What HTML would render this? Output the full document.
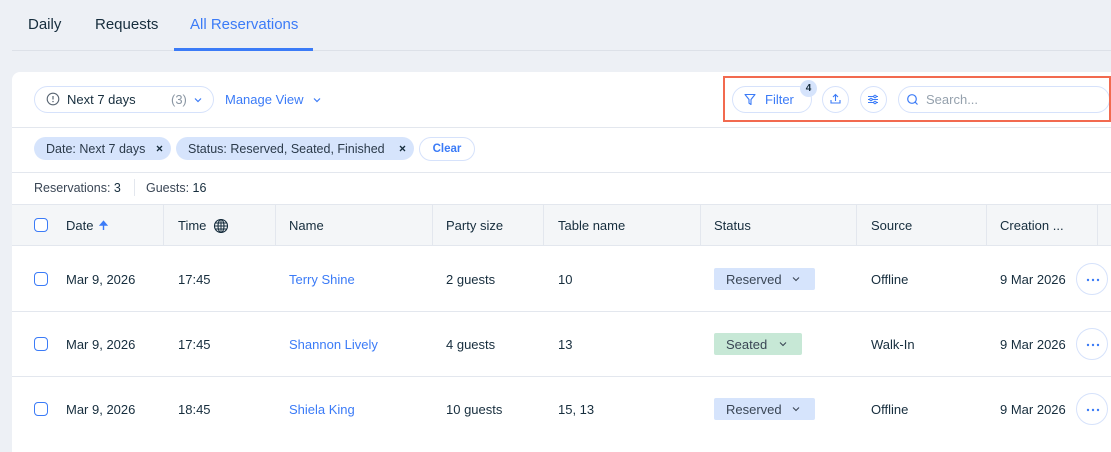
<!DOCTYPE html>
<html><head><meta charset="utf-8"><style>
*{box-sizing:border-box;margin:0;padding:0}
body{width:1111px;height:439px;overflow:hidden;background:#edf0f5;font-family:"Liberation Sans",sans-serif;color:#162d3d;position:relative;font-size:13px}
.a{position:absolute;white-space:nowrap}
.blue{color:#3b7bf7}
.card{position:absolute;left:12px;top:72px;width:1110px;height:380px;background:#fff;border-radius:8px 0 0 0}
.hl{position:absolute;left:12px;width:1100px;height:1px;background:#e3e7ee}
.pill{position:absolute;border:1px solid #d6e2fb;border-radius:16px;background:#fff}
.chip{position:absolute;height:23px;top:137px;background:#d6e4fc;border-radius:12px;font-size:12.5px;line-height:24px;padding-left:12px;color:#2b3a4a}
.x{position:absolute;top:8px}
.cb{position:absolute;left:34px;width:14px;height:14px;border:1.5px solid #3b7bf7;border-radius:4px;background:#fff}
.th{position:absolute;top:218px;font-size:13px}
.vs{position:absolute;top:205px;width:1px;height:41px;background:#e3e7ee}
.td{position:absolute;font-size:13px}
.st{position:absolute;left:714px;height:22px;border-radius:2px;font-size:13px;line-height:23px;padding-left:12px;color:#3a4655}
.st svg{position:absolute;top:8px}
.dots{position:absolute;left:1076px;width:32px;height:32px;border:1px solid #d6e2fb;border-radius:50%;background:#fff}
.dots svg{position:absolute;left:9px;top:14px}
</style></head><body>
<div class="a" style="left:28px;top:16px;font-size:15px">Daily</div>
<div class="a" style="left:95px;top:16px;font-size:15px">Requests</div>
<div class="a blue" style="left:190px;top:16px;font-size:15px">All Reservations</div>
<div class="a" style="left:12px;top:50px;width:1100px;height:1px;background:#dde1e8"></div>
<div class="a" style="left:174px;top:48px;width:139px;height:3px;background:#3b7bf7"></div>

<div class="card"></div>
<div class="pill" style="left:34px;top:86px;width:180px;height:27px"></div>
<svg class="a" style="left:46px;top:92px" width="14" height="14" viewBox="0 0 14 14"><circle cx="7" cy="7" r="5.8" fill="none" stroke="#5a6673" stroke-width="1.1"/><path d="M7 4v3.5" stroke="#5a6673" stroke-width="1.2"/><circle cx="7" cy="9.6" r=".7" fill="#5a6673"/></svg>
<div class="a" style="left:67px;top:92px;font-size:13px">Next 7 days</div>
<div class="a" style="left:171px;top:92px;font-size:13px;color:#8a96a3">(3)</div>
<svg class="a" style="left:194px;top:97px" width="8" height="6"><path d="M1 1.5l3 3 3-3" fill="none" stroke="#3b7bf7" stroke-width="1.2"/></svg>
<div class="a blue" style="left:225px;top:92px;font-size:13px">Manage View</div>
<svg class="a" style="left:313px;top:97px" width="8" height="6"><path d="M1 1.5l3 3 3-3" fill="none" stroke="#3b7bf7" stroke-width="1.2"/></svg>

<div class="pill" style="left:732px;top:86px;width:80px;height:27px"></div>
<svg class="a" style="left:744px;top:93px" width="12" height="13" viewBox="0 0 12 13"><path d="M1 1.5h10L7 6.5v5l-2-1.3V6.5z" fill="none" stroke="#3b7bf7" stroke-width="1.1" stroke-linejoin="round"/></svg>
<div class="a blue" style="left:765px;top:92px;font-size:13px">Filter</div>
<div class="a" style="left:800px;top:80px;width:17px;height:17px;border-radius:50%;background:#d6e4fc;font-size:10px;font-weight:bold;text-align:center;line-height:17px;color:#162d3d">4</div>
<div class="pill" style="left:822px;top:86px;width:27px;height:27px"></div>
<svg class="a" style="left:829px;top:92px" width="13" height="13" viewBox="0 0 13 13"><path d="M6.5 9V2.5M4 5l2.5-2.5L9 5M2 8v3h9V8" fill="none" stroke="#3b7bf7" stroke-width="1.1"/></svg>
<div class="pill" style="left:860px;top:86px;width:27px;height:27px"></div>
<svg class="a" style="left:866px;top:93px" width="14" height="13" viewBox="0 0 14 13"><path d="M2 3.5h10M2 6.5h10M2 9.5h10" stroke="#3b7bf7" stroke-width="1.1"/><circle cx="9" cy="3.5" r="1.2" fill="#fff" stroke="#3b7bf7"/><circle cx="5" cy="6.5" r="1.2" fill="#fff" stroke="#3b7bf7"/><circle cx="9" cy="9.5" r="1.2" fill="#fff" stroke="#3b7bf7"/></svg>
<div class="pill" style="left:898px;top:86px;width:212px;height:27px"></div>
<svg class="a" style="left:906px;top:93px" width="13" height="13" viewBox="0 0 13 13"><circle cx="6" cy="6" r="4.3" fill="none" stroke="#3b7bf7" stroke-width="1.2"/><path d="M9 9l2.5 2.5" stroke="#3b7bf7" stroke-width="1.2"/></svg>
<div class="a" style="left:926px;top:92px;font-size:13px;color:#95a1ad">Search...</div>
<div class="a" style="left:723px;top:76px;width:388px;height:46px;border:2px solid #f26a4f"></div>

<div class="hl" style="top:127px"></div>
<div class="chip" style="left:34px;width:137px">Date: Next 7 days<svg class="x" style="left:122px" width="7" height="7"><path d="M1 1l5 5M6 1L1 6" stroke="#162d3d" stroke-width="1.3"/></svg></div>
<div class="chip" style="left:176px;width:238px">Status: Reserved, Seated, Finished<svg class="x" style="left:223px" width="7" height="7"><path d="M1 1l5 5M6 1L1 6" stroke="#162d3d" stroke-width="1.3"/></svg></div>
<div class="a" style="left:419px;top:137px;width:56px;height:24px;border:1px solid #d6e2fb;border-radius:12px;font-size:11.5px;font-weight:bold;color:#3b7bf7;text-align:center;line-height:22px">Clear</div>
<div class="hl" style="top:172px"></div>
<div class="a" style="left:34px;top:181px;font-size:12.5px;color:#3a4655">Reservations: <span style="color:#162d3d">3</span></div>
<div class="a" style="left:134px;top:179px;width:1px;height:17px;background:#e3e7ee"></div>
<div class="a" style="left:146px;top:181px;font-size:12.5px;color:#3a4655">Guests: <span style="color:#162d3d">16</span></div>
<div class="a" style="left:12px;top:204px;width:1100px;height:42px;background:#f4f6f8;border-top:1px solid #e3e7ee;border-bottom:1px solid #e3e7ee"></div>
<div class="vs" style="left:163px"></div><div class="vs" style="left:275px"></div><div class="vs" style="left:432px"></div><div class="vs" style="left:543px"></div><div class="vs" style="left:700px"></div><div class="vs" style="left:856px"></div><div class="vs" style="left:986px"></div><div class="vs" style="left:1097px"></div>
<div class="cb" style="top:218px"></div>
<div class="th" style="left:66px">Date</div>
<svg class="a" style="left:99px;top:220px" width="9" height="11"><path d="M4.5 10V2M1.5 5l3-3.5 3 3.5z" fill="#3b7bf7" stroke="#3b7bf7" stroke-width="1.4"/></svg>
<div class="th" style="left:178px">Time</div>
<svg class="a" style="left:213px;top:218px" width="16" height="16" viewBox="0 0 16 16"><circle cx="8" cy="8" r="6.5" fill="none" stroke="#162d3d" stroke-width="1.1"/><ellipse cx="8" cy="8" rx="3" ry="6.5" fill="none" stroke="#162d3d" stroke-width="1.1"/><path d="M1.5 8h13M2.5 5h11M2.5 11h11M8 1.5v13" stroke="#162d3d" stroke-width="1"/></svg>
<div class="th" style="left:289px">Name</div>
<div class="th" style="left:446px">Party size</div>
<div class="th" style="left:558px">Table name</div>
<div class="th" style="left:714px">Status</div>
<div class="th" style="left:871px">Source</div>
<div class="th" style="left:1000px">Creation ...</div>

<div class="cb" style="top:272px"></div>
<div class="td" style="left:66px;top:272px">Mar 9, 2026</div><div class="td" style="left:178px;top:272px">17:45</div><div class="td blue" style="left:289px;top:272px">Terry Shine</div><div class="td" style="left:446px;top:272px">2 guests</div><div class="td" style="left:558px;top:272px">10</div>
<div class="st" style="top:268px;width:101px;background:#d6e4fc">Reserved<svg style="left:78px" width="8" height="6"><path d="M1 1.5l3 3 3-3" fill="none" stroke="#3a4655" stroke-width="1.1"/></svg></div>
<div class="td" style="left:871px;top:272px">Offline</div><div class="td" style="left:1000px;top:272px">9 Mar 2026</div><div class="dots" style="top:263px"><svg width="14" height="4"><circle cx="2" cy="2" r="1.2" fill="#3b7bf7"/><circle cx="7" cy="2" r="1.2" fill="#3b7bf7"/><circle cx="12" cy="2" r="1.2" fill="#3b7bf7"/></svg></div>
<div class="hl" style="top:311px"></div>
<div class="cb" style="top:337px"></div>
<div class="td" style="left:66px;top:337px">Mar 9, 2026</div><div class="td" style="left:178px;top:337px">17:45</div><div class="td blue" style="left:289px;top:337px">Shannon Lively</div><div class="td" style="left:446px;top:337px">4 guests</div><div class="td" style="left:558px;top:337px">13</div>
<div class="st" style="top:333px;width:88px;background:#c7e8d6">Seated<svg style="left:65px" width="8" height="6"><path d="M1 1.5l3 3 3-3" fill="none" stroke="#3a4655" stroke-width="1.1"/></svg></div>
<div class="td" style="left:871px;top:337px">Walk-In</div><div class="td" style="left:1000px;top:337px">9 Mar 2026</div><div class="dots" style="top:328px"><svg width="14" height="4"><circle cx="2" cy="2" r="1.2" fill="#3b7bf7"/><circle cx="7" cy="2" r="1.2" fill="#3b7bf7"/><circle cx="12" cy="2" r="1.2" fill="#3b7bf7"/></svg></div>
<div class="hl" style="top:376px"></div>
<div class="cb" style="top:402px"></div>
<div class="td" style="left:66px;top:402px">Mar 9, 2026</div><div class="td" style="left:178px;top:402px">18:45</div><div class="td blue" style="left:289px;top:402px">Shiela King</div><div class="td" style="left:446px;top:402px">10 guests</div><div class="td" style="left:558px;top:402px">15, 13</div>
<div class="st" style="top:398px;width:101px;background:#d6e4fc">Reserved<svg style="left:78px" width="8" height="6"><path d="M1 1.5l3 3 3-3" fill="none" stroke="#3a4655" stroke-width="1.1"/></svg></div>
<div class="td" style="left:871px;top:402px">Offline</div><div class="td" style="left:1000px;top:402px">9 Mar 2026</div><div class="dots" style="top:393px"><svg width="14" height="4"><circle cx="2" cy="2" r="1.2" fill="#3b7bf7"/><circle cx="7" cy="2" r="1.2" fill="#3b7bf7"/><circle cx="12" cy="2" r="1.2" fill="#3b7bf7"/></svg></div>
</body></html>
